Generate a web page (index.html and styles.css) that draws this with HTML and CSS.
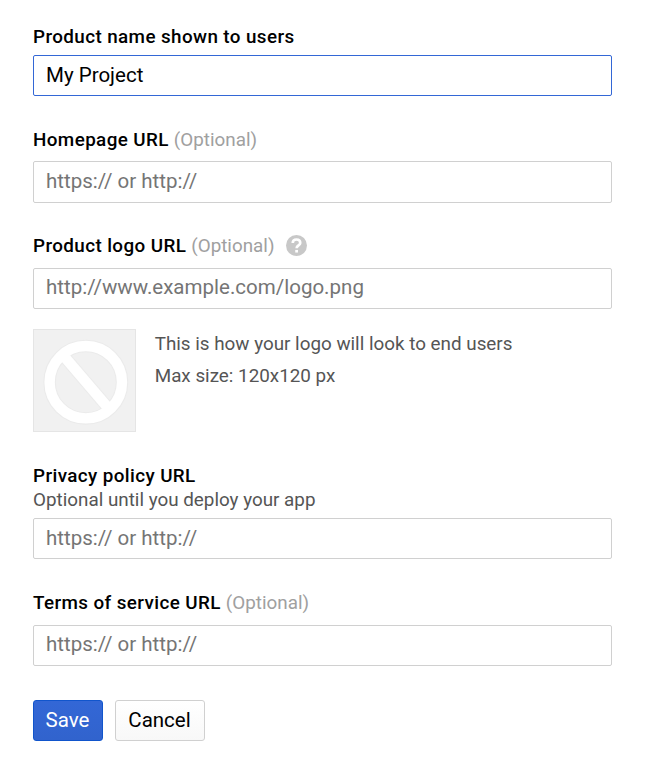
FILE: index.html
```html
<!DOCTYPE html>
<html lang="en">
<head>
<meta charset="utf-8">
<title>Product details</title>
<link rel="stylesheet" href="styles.css">
</head>
<body>
<form class="form">
  <div class="field field-name">
    <label class="label" for="name">Product name shown to users</label>
    <input class="input input-active" id="name" type="text" value="My Project">
  </div>
  <div class="field field-home">
    <label class="label" for="home">Homepage URL<span class="optional">(Optional)</span></label>
    <input class="input" id="home" type="text" placeholder="https:// or http://">
  </div>
  <div class="field field-logo">
    <label class="label" for="logo">Product logo URL<span class="optional">(Optional)</span><svg class="help" viewBox="0 0 20 20"><circle class="help-disc" cx="10" cy="10" r="10"/><path class="help-mark" d="M6.400 7.700C6.400 5.500 7.900 4.300 10 4.300s3.600 1.200 3.600 3.200c0 2.300-3.500 2.400-3.500 5"/><path class="help-dot" d="M8.800 14.200h2.600v2.500H8.800z"/></svg></label>
    <input class="input" id="logo" type="text" placeholder="http://www.example.com/logo.png">
  </div>
  <div class="preview">
    <svg class="preview-image" viewBox="0 0 103 103">
      <rect class="preview-box" x=".5" y=".5" width="102" height="102"/>
      <g class="preview-edge"><circle cx="52.800" cy="53.200" r="36.200"/><path d="M29.500 25.500 76.500 80.500"/></g>
      <g class="preview-ring"><circle cx="52.800" cy="53.200" r="36.200"/><path d="M29.500 25.500 76.500 80.500"/></g>
    </svg>
    <div class="preview-text">
      <p>This is how your logo will look to end users</p>
      <p>Max size: 120x120 px</p>
    </div>
  </div>
  <div class="field field-privacy">
    <label class="label" for="privacy">Privacy policy URL</label>
    <p class="hint">Optional until you deploy your app</p>
    <input class="input" id="privacy" type="text" placeholder="https:// or http://">
  </div>
  <div class="field field-terms">
    <label class="label" for="terms">Terms of service URL<span class="optional">(Optional)</span></label>
    <input class="input" id="terms" type="text" placeholder="https:// or http://">
  </div>
  <div class="actions">
    <button class="button button-primary" type="button">Save</button>
    <button class="button" type="button">Cancel</button>
  </div>
</form>
</body>
</html>
```
FILE: styles.css
```css
* { box-sizing: border-box; }
body { margin: 0; background: #fff; font-family: Roboto, sans-serif; font-size: 18.83px; line-height: 24px; color: #555; }
p { margin: 0; }
.form { width: 656px; padding: 25px 44px 0 33px; }
.field { display: flex; flex-direction: column; }
.label { display: flex; align-items: center; height: 24px; color: #000; font-weight: 500; letter-spacing: .4px; }
.optional { margin-left: 5px; color: #a0a0a0; font-weight: 400; letter-spacing: 0; }
.help { width: 21px; height: 21px; margin: 0 0 2px 12px; }
.help-disc { fill: #c8c8c8; }
.help-mark { fill: none; stroke: #fff; stroke-width: 2.500; }
.help-dot { fill: #fff; }
.input { width: 579px; height: 41px; margin-top: 6px; padding: 0 12px 2px; border: 1px solid #d0d0d0; border-radius: 2px; background: #fff; color: #000; font: 400 20.53px/24px Roboto, sans-serif; outline: none; }
.input::placeholder { color: #757575; opacity: 1; }
.input-active { border-color: #3367d6; }
.field-home { margin-top: 32px; }
.field-home .input { height: 42px; margin-top: 9px; }
.field-logo { margin-top: 31px; }
.field-logo .input, .field-terms .input { margin-top: 10px; padding-bottom: 4px; }
.preview { display: flex; gap: 18.7px; margin-top: 20px; }
.preview-image { width: 103px; height: 103px; }
.preview-box { fill: #f1f1f1; stroke: #e5e5e5; }
.preview-edge { fill: none; stroke: #ebebeb; stroke-width: 12.500; }
.preview-ring { fill: none; stroke: #fff; stroke-width: 10.400; }
.preview-text { line-height: 32px; margin-top: -1px; }
.field-privacy { margin-top: 32px; }
.field-terms { margin-top: 32px; }
.actions { display: flex; gap: 12px; margin-top: 34px; }
.button { width: 90px; height: 41px; padding: 0 1px 2px 0; border: 1px solid #d0d0d0; border-radius: 3px; background: linear-gradient(#fff, #f8f8f8); color: #000; font: 400 20.5px/24px Roboto, sans-serif; }
.button-primary { width: 70px; border-color: #1155cc; background: linear-gradient(#3367d6, #3163cd); color: #fff; }
```
